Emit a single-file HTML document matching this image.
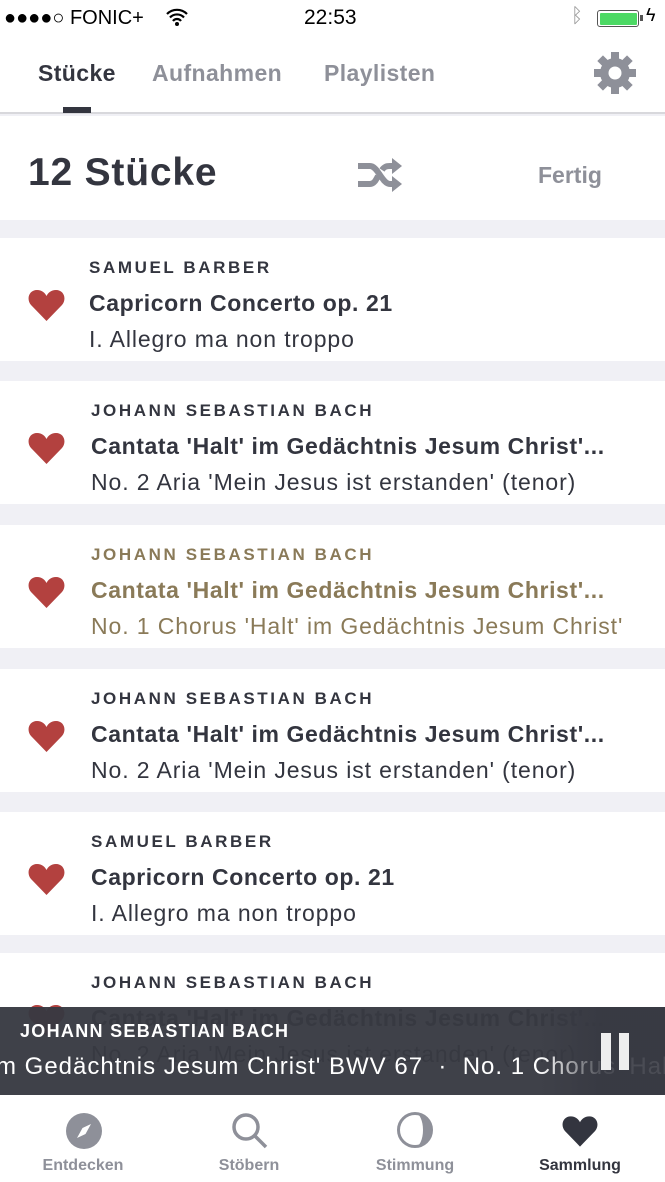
<!DOCTYPE html>
<html><head><meta charset="utf-8"><style>
*{margin:0;padding:0;box-sizing:border-box}
body{width:665px;height:1182px;overflow:hidden;background:#f0f0f5;font-family:"Liberation Sans",sans-serif;color:#33353f;position:relative}
.abs{position:absolute}
.status{top:0;left:0;width:665px;height:36px;background:#fff;font-size:21px;color:#000}
.nav{top:36px;left:0;width:665px;height:78px;background:#fff;border-bottom:2px solid #d8d8dc}
.tab{position:absolute;top:24px;font-size:23px;font-weight:bold;color:#8e9099;letter-spacing:0.4px}
.head{top:116px;left:0;width:665px;height:104px;background:#fff}
.row{position:absolute;left:0;width:665px;height:123px;background:#fff}
.row .c{position:absolute;left:91px;top:20px;font-size:17px;letter-spacing:2.6px;font-weight:bold;color:#33353f}
.row .t{position:absolute;left:91px;top:52px;font-size:23px;font-weight:bold;white-space:nowrap;letter-spacing:0.6px}
.row .s{position:absolute;left:91px;top:88px;font-size:23px;white-space:nowrap;letter-spacing:0.9px}
.row svg{position:absolute;left:28px;top:51px}
.hl .c,.hl .t,.hl .s{color:#8a7a58}
.player{top:1007px;left:0;width:665px;height:88px;background:rgba(55,57,66,0.96);color:#fff;overflow:hidden}
.tabbar{top:1095px;left:0;width:665px;height:87px;background:#fff}
.tb{position:absolute;top:62px;font-size:16px;font-weight:bold;color:#8e9099;text-align:center;width:120px}
</style></head><body>
<div class="abs status">
 <div class="abs" style="left:4px;top:7px;font-size:20px">●●●●○ FONIC+</div>
 <svg class="abs" style="left:166px;top:8px" width="22" height="18" viewBox="0 0 22 18"><path d="M1 6a14 14 0 0 1 20 0M4 9.5a9.5 9.5 0 0 1 14 0M7 13a5 5 0 0 1 8 0" stroke="#000" stroke-width="2.2" fill="none"/><circle cx="11" cy="16" r="2" fill="#000"/></svg>
 <div class="abs" style="left:304px;top:6px;font-size:21px">22:53</div>
 <div class="abs" style="left:571px;top:5px;font-size:20px;color:#999">ᛒ</div>
 <div class="abs" style="left:597px;top:10px;width:42px;height:17px;border:1.5px solid #555;border-radius:3px;padding:1.5px"><div style="width:100%;height:100%;background:#4cd964;border-radius:1px"></div></div>
 <div class="abs" style="left:640px;top:15px;width:3px;height:6px;background:#555"></div>
 <div class="abs" style="left:646px;top:5px;font-size:18px">ϟ</div>
</div>
<div class="abs nav">
 <div class="tab" style="left:38px;color:#33353f">Stücke</div>
 <div class="tab" style="left:152px">Aufnahmen</div>
 <div class="tab" style="left:324px">Playlisten</div>
 <div class="abs" style="left:63px;top:71px;width:28px;height:6px;background:#33353f"></div>
 <svg class="abs" style="left:593px;top:15px" width="44" height="44" viewBox="0 0 44 44"><g fill="#8e9099"><circle cx="22" cy="22" r="15"/><rect x="18" y="1" width="8" height="42"/><rect x="18" y="1" width="8" height="42" transform="rotate(45 22 22)"/><rect x="18" y="1" width="8" height="42" transform="rotate(90 22 22)"/><rect x="18" y="1" width="8" height="42" transform="rotate(135 22 22)"/></g><circle cx="22" cy="22" r="6.5" fill="#fff"/></svg>
</div>
<div class="abs head">
 <div class="abs" style="left:28px;top:35px;font-size:39px;font-weight:bold;letter-spacing:0.8px">12 Stücke</div>
 <svg class="abs" style="left:356px;top:40px" width="48" height="38" viewBox="0 0 48 38"><g stroke="#8e9099" stroke-width="6" fill="none"><path d="M2 10h12c8 0 12 18 20 18h4M2 28h12c4 0 6-4 8-8M26 14c2-3 4-4 8-4h4"/></g><path d="M36 2l10 8-10 8zM36 20l10 8-10 8z" fill="#8e9099"/></svg>
 <div class="abs" style="left:538px;top:46px;font-size:23px;font-weight:bold;color:#8e9099">Fertig</div>
</div>

<div class="row" style="top:238px"><svg width="37" height="32" viewBox="0 0 37 32"><path d="M18.5 32L3 16C-2 10 1 1 9 1c5 0 8 3 9.5 6C20 4 23 1 28 1c8 0 11 9 6 15z" fill="#b3413f"/></svg><div class="c" style="left:89px">SAMUEL BARBER</div><div class="t" style="left:89px">Capricorn Concerto op. 21</div><div class="s" style="left:89px">I. Allegro ma non troppo</div></div>
<div class="row" style="top:381px"><svg width="37" height="32" viewBox="0 0 37 32"><path d="M18.5 32L3 16C-2 10 1 1 9 1c5 0 8 3 9.5 6C20 4 23 1 28 1c8 0 11 9 6 15z" fill="#b3413f"/></svg><div class="c">JOHANN SEBASTIAN BACH</div><div class="t">Cantata 'Halt' im Gedächtnis Jesum Christ'...</div><div class="s">No. 2 Aria 'Mein Jesus ist erstanden' (tenor)</div></div>
<div class="row hl" style="top:525px"><svg width="37" height="32" viewBox="0 0 37 32"><path d="M18.5 32L3 16C-2 10 1 1 9 1c5 0 8 3 9.5 6C20 4 23 1 28 1c8 0 11 9 6 15z" fill="#b3413f"/></svg><div class="c">JOHANN SEBASTIAN BACH</div><div class="t">Cantata 'Halt' im Gedächtnis Jesum Christ'...</div><div class="s">No. 1 Chorus 'Halt' im Gedächtnis Jesum Christ'</div></div>
<div class="row" style="top:669px"><svg width="37" height="32" viewBox="0 0 37 32"><path d="M18.5 32L3 16C-2 10 1 1 9 1c5 0 8 3 9.5 6C20 4 23 1 28 1c8 0 11 9 6 15z" fill="#b3413f"/></svg><div class="c">JOHANN SEBASTIAN BACH</div><div class="t">Cantata 'Halt' im Gedächtnis Jesum Christ'...</div><div class="s">No. 2 Aria 'Mein Jesus ist erstanden' (tenor)</div></div>
<div class="row" style="top:812px"><svg width="37" height="32" viewBox="0 0 37 32"><path d="M18.5 32L3 16C-2 10 1 1 9 1c5 0 8 3 9.5 6C20 4 23 1 28 1c8 0 11 9 6 15z" fill="#b3413f"/></svg><div class="c">SAMUEL BARBER</div><div class="t">Capricorn Concerto op. 21</div><div class="s">I. Allegro ma non troppo</div></div>
<div class="row" style="top:953px;height:150px"><svg width="37" height="32" viewBox="0 0 37 32"><path d="M18.5 32L3 16C-2 10 1 1 9 1c5 0 8 3 9.5 6C20 4 23 1 28 1c8 0 11 9 6 15z" fill="#b3413f"/></svg><div class="c">JOHANN SEBASTIAN BACH</div><div class="t">Cantata 'Halt' im Gedächtnis Jesum Christ'...</div><div class="s">No. 2 Aria 'Mein Jesus ist erstanden' (tenor)</div></div>

<div class="abs player">
 <div class="abs" style="left:20px;top:14px;font-size:18px;letter-spacing:1.3px;font-weight:bold">JOHANN SEBASTIAN BACH</div>
 <div class="abs" style="left:-4px;top:46px;font-size:24px;letter-spacing:1px;white-space:nowrap">m Gedächtnis Jesum Christ' BWV 67 &nbsp;·&nbsp; No. 1 Chorus 'Halt'</div>
 <div class="abs" style="left:540px;top:0;width:125px;height:88px;background:linear-gradient(90deg,rgba(55,57,66,0),rgba(55,57,66,0.9) 50%)"></div>
 <div class="abs" style="left:601px;top:26px;width:10px;height:37px;background:#eee"></div>
 <div class="abs" style="left:619px;top:26px;width:10px;height:37px;background:#eee"></div>
</div>
<div class="abs tabbar">
 <svg class="abs" style="left:66px;top:18px" width="36" height="36" viewBox="0 0 36 36"><circle cx="18" cy="18" r="18" fill="#8e9099"/><path d="M25 11L19.5 21 11 25 16.5 15z" fill="#fff"/></svg>
 <svg class="abs" style="left:230px;top:16px" width="40" height="40" viewBox="0 0 40 40"><circle cx="16" cy="16" r="12" stroke="#8e9099" stroke-width="3.5" fill="none"/><path d="M25 25l11 11" stroke="#8e9099" stroke-width="3.5"/></svg>
 <svg class="abs" style="left:396px;top:16px" width="38" height="38" viewBox="0 0 38 38"><circle cx="19" cy="19" r="16.5" fill="#fff" stroke="#8e9099" stroke-width="3"/><path d="M19 2A17 17 0 0 1 19 36A8 17 0 0 0 19 2Z" fill="#8e9099"/></svg>
 <svg class="abs" style="left:562px;top:20px" width="36" height="32" viewBox="0 0 37 32"><path d="M18.5 32L3 16C-2 10 1 1 9 1c5 0 8 3 9.5 6C20 4 23 1 28 1c8 0 11 9 6 15z" fill="#33353f"/></svg>
 <div class="tb" style="left:23px">Entdecken</div>
 <div class="tb" style="left:189px">Stöbern</div>
 <div class="tb" style="left:355px">Stimmung</div>
 <div class="tb" style="left:520px;color:#33353f">Sammlung</div>
</div>
</body></html>
